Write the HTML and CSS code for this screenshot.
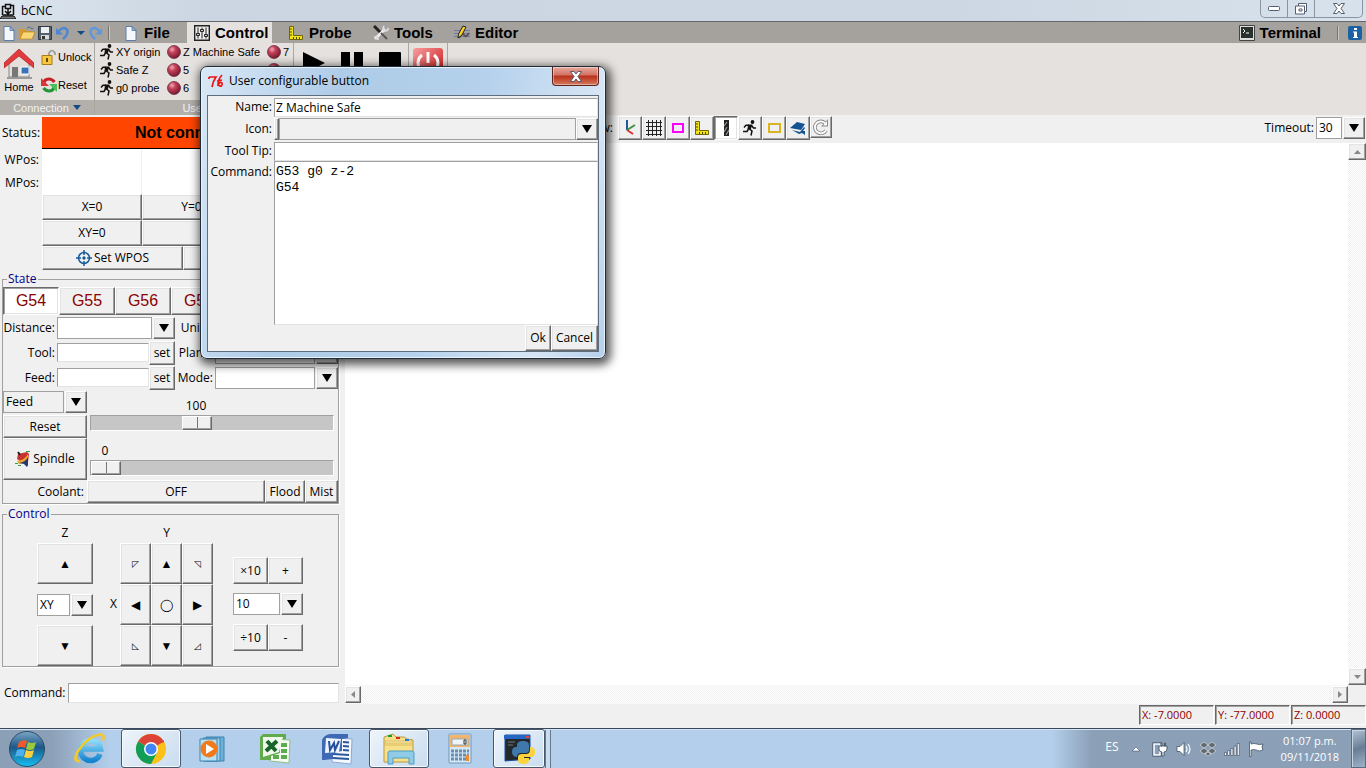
FILE: index.html
```html
<!DOCTYPE html>
<html lang="en">
<head>
<meta charset="utf-8">
<title>bCNC</title>
<link rel="stylesheet" href="styles.css">
</head>
<body>
<svg class="defs" aria-hidden="true">
  <linearGradient id="sky" x1="0" y1="0" x2="0" y2="1"><stop offset="0" stop-color="#7ba6c4"/><stop offset=".45" stop-color="#1c5888"/><stop offset="1" stop-color="#16c0f4"/></linearGradient>
  <linearGradient id="redg" x1="0" y1="0" x2="1" y2="1"><stop offset="0" stop-color="#f6a0a0"/><stop offset="1" stop-color="#cc0d10"/></linearGradient>
  <linearGradient id="ieg" x1="0" y1="0" x2="0" y2="1"><stop offset="0" stop-color="#8bdcfa"/><stop offset="1" stop-color="#1684cf"/></linearGradient>
  <radialGradient id="ballg" cx=".35" cy=".3" r=".7"><stop offset="0" stop-color="#f3a8b4"/><stop offset=".4" stop-color="#c33f58"/><stop offset="1" stop-color="#7a1c30"/></radialGradient>
  <symbol id="page" viewBox="0 0 16 16"><path d="M3 1.500h6l4 4v10H3z" fill="#f4f8fd" stroke="#5c7fae"/><path d="M9 1.500v4h4z" fill="#9fbde2" stroke="#41659a" stroke-width=".7"/></symbol>
  <symbol id="run" viewBox="0 0 16 16"><circle cx="10.500" cy="2" r="1.900" fill="#111"/><path d="M6 4.500h4.500L8.500 10 5.500 9z" fill="#111"/><path d="M7 5.200H4L2 7.500M9.500 5.500l2 2.500H14M6.500 9L5 11.500H1M7.500 9l2.500 2-1 4.500" fill="none" stroke="#111" stroke-width="1.500"/></symbol>
  <symbol id="ball" viewBox="0 0 16 16"><circle cx="8" cy="8" r="6.500" fill="url(#ballg)" stroke="#5b2030" stroke-width=".7"/></symbol>
  <symbol id="ruler" viewBox="0 0 16 16"><path d="M1.500 1.500h4v9h9v4h-13z" fill="#f0e21c" stroke="#706508"/><path d="M2 4h2M2 7h2M2 10h2M5.500 14v-2M8.500 14v-2M11.500 14v-2" stroke="#504800"/></symbol>
</svg>

<div class="window">
  <header class="titlebar">
    <svg class="i16" viewBox="0 0 16 16"><path d="M0 16l2-3h12l2 3z" fill="#777" stroke="#111"/><path d="M2.500 12V3.500h3M13.500 12V2.500h-3M5.500 1.500h5v4h-5zM8 5v6M5 8l3 3 3-3M3 12h10" fill="none" stroke="#111" stroke-width="1.500"/></svg>
    <span>bCNC</span>
    <div class="wincontrols">
      <button aria-label="Minimize"><svg width="12" height="5"><rect x=".5" y=".5" width="11" height="4" rx="1" fill="#fff" stroke="#555d70"/></svg></button>
      <button aria-label="Restore"><svg width="12" height="12"><path d="M3.500 .5h8v8h-2v2.500h-9v-8h3z" fill="#fff" stroke="#555d70"/><path d="M4 6h3v2H4z" fill="#fff" stroke="#555d70"/><path d="M3.500 3h6v5.500" fill="none" stroke="#555d70"/></svg></button>
      <button aria-label="Close"><svg width="12" height="11"><path d="M.5 .5h3.500L6 3 8 .5h3.500L8 5.500l3.500 5H8L6 8l-2 2.500H.5L4 5.500z" fill="#fff" stroke="#555d70"/></svg></button>
    </div>
  </header>

  <nav class="tabs">
    <div class="quick">
      <button aria-label="New"><svg class="i16"><use href="#page"/></svg></button>
      <button aria-label="Open"><svg class="i16" viewBox="0 0 16 16"><path d="M1 14V4h5l1 2h6v8z" fill="#d79b2c"/><path d="M1 14l3-7h12l-3 7z" fill="#fbd774" stroke="#b67b1b" stroke-width=".6"/><path d="M8 3q3-2.500 5 1l1.500-1" fill="none" stroke="#4b6c93"/></svg></button>
      <button aria-label="Save"><svg class="i16" viewBox="0 0 16 16"><path d="M1.500 1.500h13v13h-13z" fill="#54606c" stroke="#2f3a44"/><path d="M4 2h8v6H4z" fill="#eef1f4"/><path d="M4 10h8v4.500H4z" fill="#d6dadd"/><path d="M5 11h3v3H5z" fill="#333"/></svg></button>
      <button aria-label="Undo"><svg class="i16" viewBox="0 0 16 16"><path d="M4 6Q8 1 12 4.500 14 9 8 14" fill="none" stroke="#4b86d6" stroke-width="2.400"/><path d="M1 3v6.500h7z" fill="#4b86d6"/></svg></button>
      <button aria-label="Undo list"><svg class="i16" viewBox="0 0 16 16"><path d="M4 6h8l-4 4z" fill="#134b85"/></svg></button>
      <button aria-label="Redo"><svg class="i16" viewBox="0 0 16 16"><path d="M12 6Q8 1 4 4.500 2 9 8 14" fill="none" stroke="#5f97dc" stroke-width="2.400"/><path d="M15 3v6.500H8z" fill="#5f97dc"/></svg></button>
      <i class="sep"></i>
    </div>
    <button class="tab"><svg class="i16"><use href="#page"/></svg>File</button>
    <button class="tab on"><svg class="i16" viewBox="0 0 16 16"><path d="M.7.700h14.600v14.600H.7z" fill="#eee" stroke="#222" stroke-width="1.400"/><path d="M4 2.500v11M8 2.500v11M12 2.500v11" stroke="#222"/><path d="M2.500 8.500h3v2h-3zM6.500 4.500h3v2h-3zM10.500 9.500h3v2h-3z" fill="#ccc" stroke="#222"/></svg>Control</button>
    <button class="tab probe"><svg class="i16"><use href="#ruler"/></svg>Probe</button>
    <button class="tab tools"><svg class="i16" viewBox="0 0 16 16"><path d="M2 14L12 4" stroke="#eee" stroke-width="2.600"/><path d="M11 1q-2 4 1 5 3 0 3.500-3M1 12q4-1 4 3" fill="none" stroke="#ddd" stroke-width="1.800"/><path d="M1 1l6 6" stroke="#222" stroke-width="3"/><path d="M8 8l6 6" stroke="#555" stroke-width="2"/></svg>Tools</button>
    <button class="tab editor"><svg class="i16" viewBox="0 0 16 16"><path d="M0 5.500h16M0 8.500h16M0 11.500h16" stroke="#7376a8"/><path d="M5 13Q8 7 10 10t5-2" fill="none" stroke="#555" stroke-width="2"/><path d="M4 13l.5-4L9 1l3 1-4 8z" fill="#f9cf22" stroke="#222"/></svg>Editor</button>
    <div class="tabs-end">
      <button class="tab"><svg class="i16" viewBox="0 0 16 16"><path d="M.5.500h15v15H.5z" fill="#ddd" stroke="#444"/><path d="M2 2h12v11H2z" fill="#29312f"/><path d="M4 4l2 2-2 2M7 8h3" fill="none" stroke="#fff"/></svg>Terminal</button>
      <i class="sep"></i>
      <button class="info" aria-label="About"><svg width="14" height="14"><rect width="14" height="14" rx="2" fill="#1d61a5"/><path d="M6 2h3v2H6zM5 5.500h4V11h1v1H5v-1h1V6.500H5z" fill="#fff"/></svg></button>
    </div>
  </nav>

  <div class="ribbon">
    <section class="group conn">
      <div class="body">
        <button class="home"><svg width="30" height="30" viewBox="0 0 30 30"><path d="M5 13l10-8 10 8v15H5z" fill="#e4dfd8" stroke="#888"/><path d="M8 18h6v10H8z" fill="#777"/><path d="M17 18h8v7h-8z" fill="#3674b7" stroke="#fff"/><path d="M3 28h25v2H3z" fill="#999"/><path d="M0 14L15 0l15 14v5L15 7 0 19z" fill="#e13b3d" stroke="#a81a20" stroke-width=".7"/></svg>Home</button>
        <div class="stack">
          <button><svg class="i16" viewBox="0 0 16 16"><path d="M8 7V4q3-5 6 0v2" fill="none" stroke="#999" stroke-width="1.700"/><path d="M1 6.500h10v9H1z" fill="#f6c83e" stroke="#a97b17"/><path d="M5 9h2v4H5z" fill="#6a4b08"/></svg>Unlock</button>
          <button><svg class="i16" viewBox="0 0 16 16"><path d="M2.500 7Q3 2 8 2q3 0 5.500 3" fill="none" stroke="#c62029" stroke-width="3.200"/><path d="M0 1v8h8z" fill="#d9343b"/><path d="M13.500 9q-1 5-5.500 5-3 0-5.500-3" fill="none" stroke="#239437" stroke-width="3.200"/><path d="M16 15V7H8z" fill="#46c05a"/></svg>Reset</button>
        </div>
      </div>
      <h2>Connection <svg width="8" height="5"><path d="M0 0h8L4 5z" fill="#134b85"/></svg></h2>
    </section>
    <section class="group user">
      <div class="body">
        <button><svg class="i16"><use href="#run"/></svg>XY origin</button>
        <button><svg class="i16"><use href="#ball"/></svg>Z Machine Safe</button>
        <button><svg class="i16"><use href="#ball"/></svg>7</button>
        <button><svg class="i16"><use href="#run"/></svg>Safe Z</button>
        <button><svg class="i16"><use href="#ball"/></svg>5</button>
        <button aria-label="User button"><svg class="i16"><use href="#ball"/></svg></button>
        <button><svg class="i16"><use href="#run"/></svg>g0 probe</button>
        <button><svg class="i16"><use href="#ball"/></svg>6</button>
      </div>
      <h2>User</h2>
    </section>
    <section class="group play">
      <div class="body">
        <button aria-label="Start"><svg width="24" height="24"><path d="M1 1l22 11L1 23z"/></svg></button>
        <button aria-label="Pause"><svg width="24" height="24"><path d="M1 1h9v22H1zM14 1h9v22h-9z"/></svg></button>
        <button aria-label="Stop"><svg width="24" height="24"><rect x="1" y="1" width="22" height="22" rx="1"/></svg></button>
      </div>
    </section>
    <section class="group power">
      <div class="body">
        <button aria-label="Power"><svg width="30" height="30"><rect width="30" height="30" rx="3" fill="url(#redg)"/><path d="M9 7a10 10 0 1 0 12 0M15 4v11" fill="none" stroke="#fff" stroke-width="3"/></svg></button>
      </div>
    </section>
  </div>

  <main class="work">
    <aside class="side">
      <div class="dro">
        <span class="lab">Status:</span><button class="state">Not connected</button>
        <span class="lab">WPos:</span><output></output><output></output><output></output>
        <span class="lab">MPos:</span><output></output><output></output><output></output>
        <button class="raised c2">X=0</button><button class="raised">Y=0</button><button class="raised">Z=0</button>
        <button class="raised c2">XY=0</button><button class="raised wide">XYZ=0</button>
      </div>
      <div class="wpos">
        <button class="raised"><svg class="i16" viewBox="0 0 16 16"><circle cx="8" cy="8" r="5.500" fill="none" stroke="#16599b" stroke-width="1.500"/><circle cx="8" cy="8" r="1.700" fill="#16599b"/><path d="M8 0v5M8 11v5M0 8h5M11 8h5" stroke="#16599b" stroke-width="1.500"/></svg>Set WPOS</button>
        <button class="raised">Move Gantry</button>
      </div>

      <fieldset class="frame">
        <legend>State</legend>
        <div class="wcs">
          <button class="raised pressed">G54</button><button class="raised">G55</button><button class="raised">G56</button><button class="raised">G57</button><button class="raised">G58</button><button class="raised">G59</button>
        </div>
        <div class="params">
          <label for="dist">Distance:</label>
          <div class="combo span"><select id="dist"><option></option></select><span class="arrow"></span></div>
          <label for="units">Units:</label>
          <div class="combo"><select id="units"><option></option></select><span class="arrow"></span></div>
          <label for="tool">Tool:</label><input class="entry" id="tool"><button class="raised">set</button>
          <label for="plane">Plane:</label>
          <div class="combo"><select id="plane"><option></option></select><span class="arrow"></span></div>
          <label for="feed">Feed:</label><input class="entry" id="feed"><button class="raised">set</button>
          <label for="mode">Mode:</label>
          <div class="combo"><select id="mode"><option></option></select><span class="arrow"></span></div>
        </div>
        <div class="override">
          <div class="ovleft">
            <div class="combo grey"><select aria-label="Override"><option>Feed</option></select><span class="arrow"></span></div>
            <button class="raised">Reset</button>
            <button class="raised"><svg class="i16" viewBox="0 0 16 16"><path d="M3 3l9-2 2 2-1 8-5 1-6-4z" fill="#c5342e"/><path d="M2 10q8-1 11-7v4l-4 5-5 1z" fill="#f0a528"/><path d="M4 12q7-1 9-6v8l-1 2-3-3z" fill="#25376f"/><path d="M11 .5h4M0 12.500h3M3 14.500h3" stroke="#2ba53a"/><path d="M3 1l2 3" stroke="#222" stroke-width="2"/></svg>Spindle</button>
          </div>
          <div class="ovright">
            <output class="ov1" for="ov">100</output>
            <input type="range" id="ov" aria-label="Feed override" min="0" max="232" value="100">
            <output for="rpm">0</output>
            <input type="range" id="rpm" aria-label="Spindle speed" min="0" max="12000" value="0">
          </div>
        </div>
        <div class="coolant"><span>Coolant:</span><button class="raised">OFF</button><button class="raised">Flood</button><button class="raised">Mist</button></div>
      </fieldset>

      <fieldset class="frame jog">
        <legend>Control</legend>
        <div class="jogrow">
          <div class="zcol"><span>Z</span><button class="raised">▲</button><div class="combo"><select aria-label="Plane lock"><option>XY</option></select><span class="arrow"></span></div><button class="raised">▼</button></div>
          <span class="xlab">X</span>
          <div class="pad">
            <span>Y</span>
            <button class="raised diag">◸</button><button class="raised">▲</button><button class="raised diag">◹</button>
            <button class="raised">◀</button><button class="raised">◯</button><button class="raised">▶</button>
            <button class="raised diag">◺</button><button class="raised">▼</button><button class="raised diag">◿</button>
          </div>
          <div class="steps">
            <button class="raised">×10</button><button class="raised">+</button>
            <div class="combo"><select aria-label="Step"><option>10</option></select><span class="arrow"></span></div>
            <button class="raised">÷10</button><button class="raised">-</button>
          </div>
        </div>
      </fieldset>
      <div class="cmd"><label for="cmd">Command:</label><input class="entry" id="cmd"></div>
    </aside>

    <section class="view">
      <div class="viewbar">
        <span class="viewlab">View:</span>
        <button class="raised" aria-label="Axes"><svg class="i16" viewBox="0 0 16 16"><path d="M5 0v10" stroke="#1e5b98" stroke-width="2"/><path d="M5 10l8-5" stroke="#3d9140" stroke-width="2"/><path d="M5 10l6 4" stroke="#d33" stroke-width="2"/></svg></button>
        <button class="raised" aria-label="Grid"><svg class="i16" viewBox="0 0 16 16"><path d="M2.500 0v16M6.500 0v16M10.500 0v16M14.500 0v16M0 2.500h16M0 6.500h16M0 10.500h16M0 14.500h16" stroke="#222"/></svg></button>
        <button class="raised" aria-label="Margins"><svg class="i16" viewBox="0 0 16 16"><path d="M3 4h10v8H3z" fill="none" stroke="#f0f" stroke-width="2"/></svg></button>
        <button class="raised" aria-label="Probe"><svg class="i16"><use href="#ruler"/></svg></button>
        <button class="raised pressed" aria-label="Paths"><svg class="i16" viewBox="0 0 16 16"><path d="M6 0h5v16H6z" fill="#222"/><path d="M6 6l3-4M6 12l3-5M8 15l3-5" stroke="#999" stroke-width="1.200"/></svg></button>
        <button class="raised" aria-label="Rapids"><svg class="i16"><use href="#run"/></svg></button>
        <button class="raised" aria-label="Workarea"><svg class="i16" viewBox="0 0 16 16"><path d="M3 4h11v8H3z" fill="none" stroke="#d9b423" stroke-width="2"/></svg></button>
        <button class="raised" aria-label="Camera"><svg class="i16" viewBox="0 0 16 16"><path d="M0 8l7-6 8 2-4 6z" fill="#155493"/><path d="M2 10l8 2 4-5 1 1-2 3h2v4l-3-2-3 1z" fill="#155493"/></svg></button>
        <button class="raised" aria-label="Refresh"><svg class="i16" viewBox="0 0 16 16"><path d="M13 11.500A6 6 0 1 1 12 4" fill="none" stroke="#888" stroke-width="3.600"/><path d="M15 0v7.500H8z" fill="#888"/><path d="M13 11.500A6 6 0 1 1 12.500 4.500" fill="none" stroke="#fff" stroke-width="1.800"/><path d="M14 2v4.500h-4z" fill="#fff"/></svg></button>
        <div class="timeout"><label for="tmo">Timeout:</label><div class="combo"><select id="tmo"><option>30</option></select><span class="arrow"></span></div></div>
      </div>
      <div class="canvas"></div>
      <div class="vscroll"><button class="raised" aria-label="Scroll up"><svg width="7" height="4"><path d="M0 4h7L3.500 0z"/></svg></button><button class="raised" aria-label="Scroll down"><svg width="7" height="4"><path d="M0 0h7L3.500 4z"/></svg></button></div>
      <div class="hscroll"><button class="raised" aria-label="Scroll left"><svg width="4" height="7"><path d="M4 0v7L0 3.500z"/></svg></button><button class="raised" aria-label="Scroll right"><svg width="4" height="7"><path d="M0 0v7l4-3.500z"/></svg></button></div>
    </section>
  </main>

  <footer class="status"><span>X: -7.0000</span><span>Y: -77.0000</span><span>Z: 0.0000</span></footer>

  <div class="taskbar">
    <button class="start" aria-label="Start"><svg width="38" height="38" viewBox="0 0 38 38"><circle cx="19" cy="19" r="17.500" fill="url(#sky)" stroke="#2c4b6b"/><path d="M11 12q4-3 8-1l-2 7q-4-2-8 0z" fill="#f0592b"/><path d="M20 12q4 2 8 0l-2 7q-4 2-8 0z" fill="#9bc93c"/><path d="M9 20q4-2 8 0l-2 7q-4-2-8 0z" fill="#4eb1ef"/><path d="M18 20q4 2 8 0l-2 7q-4 2-8 0z" fill="#fdcf3e"/></svg></button>
    <button class="app ie" aria-label="Internet Explorer"><svg width="32" height="32" viewBox="0 0 32 32"><path d="M26 21A10 10 0 1 1 26.500 16H9" fill="none" stroke="url(#ieg)" stroke-width="5.500"/><path d="M6 28Q-2 29 4 18 14 3 26 1.500q5-.5 3 6" fill="none" stroke="#f6c924" stroke-width="2.500"/></svg></button>
    <button class="app active" aria-label="Chrome"><svg width="32" height="32" viewBox="0 0 32 32"><circle cx="16" cy="16" r="15" fill="#fbc116"/><path d="M16 16L3 8.500A15 15 0 0 1 29 8.500z" fill="#db4437"/><path d="M3 8.500A15 15 0 0 0 16 31l6-11.500L16 16z" fill="#0f9d58"/><path d="M16 8.500h13" stroke="#db4437" stroke-width="2"/><circle cx="16" cy="16" r="7" fill="#fff"/><circle cx="16" cy="16" r="5.500" fill="#4285f4"/></svg></button>
    <button class="app" aria-label="Media Player"><svg width="32" height="32" viewBox="0 0 32 32"><path d="M9 4h18v24H9z" fill="#6db3d9" stroke="#3a83ae"/><path d="M6 5h17v23H6z" fill="#9fd1ec" stroke="#3a83ae"/><path d="M3 6h17v22H3z" fill="#b9dff2" stroke="#3a83ae"/><circle cx="12" cy="16" r="8.500" fill="#f17a1a"/><path d="M9 11l8 5-8 5z" fill="#fff"/></svg></button>
    <button class="app" aria-label="Excel"><svg width="32" height="32" viewBox="0 0 32 32"><path d="M11 6l20 1-1 23-19-2z" fill="#f4faf2" stroke="#8fbf86"/><path d="M22 10h6v4h-6zM22 16h6v4h-6zM22 22h6v4h-6zM14 22h6v4h-6z" fill="#5cab4e"/><path d="M1 4l3-3h23v5l-6 1v13l-9 3v4H1z" fill="#62ab4d"/><path d="M4 4h20L20 19 4 24z" fill="#eff8ea"/><path d="M8 8l9 10M18 8L7 18" stroke="#17652a" stroke-width="4"/></svg></button>
    <button class="app" aria-label="Word"><svg width="32" height="32" viewBox="0 0 32 32"><path d="M12 5l19 1-1 25-19-2z" fill="#f5f9ff" stroke="#8ba9d7"/><path d="M22 9l6 .5M22 13l6 .5M22 17l6 .5M12 21l16 1M12 25l16 1" stroke="#2b579a" stroke-width="2"/><path d="M1 7q2-5 8-6h18v4l-6 1v12l-9 2v6L3 27H1z" fill="#3f69b4"/><path d="M5 5l15 1-2 13-14 1z" fill="#eef4fd"/><path d="M8 8l1 9 4-7 1 7 4-9" fill="none" stroke="#23509d" stroke-width="2"/></svg></button>
    <button class="app active files" aria-label="Explorer"><svg width="34" height="32" viewBox="0 0 34 32"><path d="M2 4l9-3 3 3h8l3 2 6 1v22H2z" fill="#f7e08c" stroke="#b99a3f"/><path d="M3 8h27v2H3zM3 12h27" fill="#fdf2bd" stroke="#d8bb5a"/><path d="M6 2h4v2H6z" fill="#1a9f2d"/><path d="M14 4h4v2h-4z" fill="#d42b20"/><path d="M23 6h4v2h-4z" fill="#2b7cd4"/><path d="M6 31V20q0-2 2-2h22q2 0 2 2v11h-5v-6H11v6z" fill="#8fcbe6" stroke="#4f9dc3"/></svg></button>
    <button class="app calc" aria-label="Calculator"><svg width="24" height="32" viewBox="0 0 24 32"><rect x="1" y="1" width="22" height="29" rx="1" fill="#d5e8f7" stroke="#7195b8"/><path d="M2 2h20v12H2z" fill="#f3b46e"/><path d="M4 6h16v6H4z" fill="#eef6fb" stroke="#95a9b6"/><path d="M16 7h2v4h-2z" fill="none" stroke="#333"/><path d="M3 18h18M3 22h18M3 26h18" stroke="#6b8eae" stroke-width="3" stroke-dasharray="3 1"/><path d="M18 22h3v6h-3z" fill="#f18a2b"/></svg></button>
    <button class="app active py" aria-label="Python"><svg width="32" height="32" viewBox="0 0 32 32"><path d="M2 2h25v24L2 28z" fill="#23282d" stroke="#164ea0"/><path d="M1 2h26v4H1z" fill="#2467c4"/><path d="M23 3h3v2h-3z" fill="#e04434"/><path d="M5 9h7M5 12h5" stroke="#777"/><path d="M14 15v-3q0-4 6-4t6 4v5q0 3-3 3h-5q-4 0-4 4h-1q-4-1-4-5 0-5 4-5h7v1z" fill="#3f79ab"/><path d="M27 14q5 0 5 5t-4 5h-7v1h5v2q0 4-6 4-5 0-5-4v-3q0-3 4-3h4q4 0 4-4z" fill="#fdd33c"/></svg></button>
    <i class="stacked"></i>
    <div class="tray">
      <span class="lang">ES</span>
      <svg width="10" height="16"><path d="M1 10h8L5 6z" fill="#fff" stroke="#43597a" stroke-width=".6"/></svg>
      <svg class="i16" viewBox="0 0 16 16"><path d="M2 3h6v11H2z" fill="none" stroke="#35475c" stroke-width="3"/><path d="M2 3h6v11H2z" fill="#8b9fb6" stroke="#fff" stroke-width="1.600"/><path d="M7 5h8v3q0 3-3 3v4h-2v-4q-3 0-3-3zM9 2h1v3H9zM12.500 2h1v3h-1z" fill="#fff" stroke="#35475c" stroke-width=".8"/></svg>
      <svg class="i16" viewBox="0 0 16 16"><path d="M1 5.500h3l4-4v13l-4-4H1z" fill="#fff" stroke="#35475c" stroke-width=".7"/><path d="M10 5q2 3 0 6M12 3q4 5 0 10" fill="none" stroke="#fff" stroke-width="1.200"/></svg>
      <svg class="i16" viewBox="0 0 16 16"><path d="M4 1l4 3-4 3-4-3zM12 1l4 3-4 3-4-3zM4 7l4 3-4 3-4-3zM12 7l4 3-4 3-4-3zM8 11l3 2-3 2-3-2z" fill="#61696f" stroke="#e6e9ed" stroke-width=".6"/></svg>
      <svg class="i16" viewBox="0 0 16 16"><path d="M.5 11.500h2v3h-2zM3.700 9.500h2v5h-2zM6.900 7.500h2v7h-2zM10.100 5h2v9.500h-2zM13.300 2.500h2v12h-2z" fill="#fff" stroke="#35475c" stroke-width=".6"/></svg>
      <svg class="i16" viewBox="0 0 16 16"><path d="M1.500 1v14.500h1.500V9q3-1 5 0 3 2 7 0-2-3 0-6-4 1-6 0-3-1-6 0V1z" fill="#fff" stroke="#35475c" stroke-width=".7"/></svg>
      <time>01:07 p.m.<br>09/11/2018</time>
      <button class="desk" aria-label="Show desktop"></button>
    </div>
  </div>
</div>

<div class="dialog" role="dialog" aria-labelledby="dlgt">
  <div class="dlgtitle"><svg class="i16" viewBox="0 0 16 16"><path d="M1 4h7Q5 8 4 14M1 4v2M14 2q-4 4-4 11M9 8l5-1M10 12q5 3 4-2-2-2-4 2" fill="none" stroke="#f01010" stroke-width="1.700"/></svg><span id="dlgt">User configurable button</span></div>
  <button class="dlgclose" aria-label="Close"><svg width="12" height="11"><path d="M.5 .5h3.500L6 3 8 .5h3.500L8 5.500l3.500 5H8L6 8l-2 2.500H.5L4 5.500z" fill="#fff" stroke="#555d70"/></svg></button>
  <form class="dlgbody">
    <label for="bname">Name:</label><input class="entry" id="bname" value="Z Machine Safe">
    <label for="bicon">Icon:</label><div class="combo grey iconsel"><i class="raised"></i><select id="bicon"><option></option></select><span class="arrow"></span></div>
    <label for="btip">Tool Tip:</label><input class="entry" id="btip">
    <label for="bcmd" class="top">Command:</label><textarea class="entry" id="bcmd" spellcheck="false">G53 g0 z-2
G54</textarea>
    <div class="actions"><button type="button" class="raised">Ok</button><button type="button" class="raised">Cancel</button></div>
  </form>
</div>
</body>
</html>
```
FILE: styles.css
```css
* { box-sizing: border-box; }
body, h2, fieldset { margin: 0; padding: 0; }
body { font: 12px/16px "Open Sans", "Noto Sans", sans-serif; color: #000; background: #f0f0f0; }
button, input, select, textarea { font: inherit; color: inherit; margin: 0; padding: 0; border-radius: 0; }
button { background: none; border: 0; white-space: nowrap; }
svg { flex: none; display: block; }
.defs { position: absolute; width: 0; height: 0; }
.i16 { width: 16px; height: 16px; }
.window { display: flex; flex-direction: column; height: 100vh; overflow: hidden; }

/* Tk widgets */
.raised, .arrow {
  display: flex; align-items: center; justify-content: center; gap: 2px;
  background: #f0f0f0; border: 1px solid; border-color: #fff #696969 #696969 #fff;
  box-shadow: inset -1px -1px #a0a0a0, inset 1px 1px #e3e3e3;
  min-width: 0; overflow: hidden;
}
.raised.pressed { background: #fff; border-color: #696969 #fff #fff #696969; box-shadow: inset 1px 1px #a0a0a0, inset -1px -1px #e3e3e3; }
.entry { background: #fff; border: 1px solid; border-color: #a0a0a0 #e3e3e3 #e3e3e3 #a0a0a0; min-width: 0; height: 19px; padding: 0 1px; }
.combo { display: flex; height: 22px; gap: 1px; min-width: 0; }
.combo select { appearance: none; flex: 1; min-width: 0; background: #fff; border: 1px solid #a0a0a0; padding: 0 2px; }
.combo.grey select { background: #f0f0f0; }
.arrow { width: 22px; flex: none; pointer-events: none; }
.arrow::before { content: ""; border: 5px solid transparent; border-top: 8px solid #000; border-bottom: 0; }

/* title bar */
.titlebar { display: flex; align-items: center; gap: 5px; height: 22px; flex: none; background: linear-gradient(90deg, #dce5ee, #cbd6e2 15%, #ccd7e3 70%, #d8e2ec); border-bottom: 1px solid #64686d; }
.wincontrols { display: flex; align-self: flex-start; margin-left: auto; margin-right: 3px; border: 1px solid #8a95a3; border-top: 0; border-radius: 0 0 5px 5px; }
.wincontrols button { width: 27px; height: 17px; display: flex; align-items: center; justify-content: center; border-right: 1px solid #8a95a3; }
.wincontrols button:last-child { width: 47px; border: 0; }

/* tabs */
.tabs { display: flex; height: 21px; flex: none; background: #a5a19d; font: bold 15px/20px "Liberation Sans", Arial, sans-serif; }
.quick { display: flex; align-items: center; width: 116px; flex: none; padding-left: 1px; }
.quick button { width: 18px; flex: none; }
.quick button:nth-of-type(5) { width: 14px; }
.sep { width: 2px; height: 14px; background: #77736f; border-right: 1px solid #c9c6c3; margin-left: 3px; }
.tab { display: flex; align-items: center; gap: 5px; padding: 0 4px 0 7px; }
.quick + .tab { width: 71px; }
.on { background: #e5e1de; width: 85px; }
.probe, .tools, .editor { padding-left: 16px; }
.probe { width: 85px; }
.tools { width: 81px; }
.tabs-end { display: flex; align-items: center; margin-left: auto; }
.tabs-end .sep { margin: 0 9px 0 12px; }
.info { margin-right: 4px; }

/* ribbon */
.ribbon { display: flex; height: 72px; flex: none; background: #e5e1de; font: 11px/14px "Liberation Sans", Arial, sans-serif; }
.group { display: flex; flex-direction: column; border-right: 1px solid #aaa6a2; }
.group .body { flex: 1; }
.group button { display: flex; align-items: center; gap: 1px; }
.group h2 { display: flex; align-items: center; justify-content: center; gap: 4px; height: 15px; font: inherit; font-weight: 400; color: #f4f2f0; background: #b3afab; }
.conn { width: 95px; }
.conn .body { display: flex; gap: 4px; padding-left: 4px; }
.conn .home { flex-direction: column; gap: 1px; padding-top: 6px; }
.stack { display: flex; flex-direction: column; justify-content: space-between; padding: 6px 0 7px 3px; }
.user { width: 199px; }
.user .body { display: grid; grid-template-columns: 67px 100px 1fr; grid-auto-rows: 18px; padding-left: 4px; }
.play { width: 115px; }
.play .body { display: flex; align-items: flex-start; gap: 14px; padding: 8px 0 0 8px; }
.power { width: 39px; }
.power .body { padding: 5px 4px; }

/* left panel */
.work { display: flex; flex: 1; min-height: 0; }
.side { width: 345px; flex: none; display: flex; flex-direction: column; padding: 2px 6px 1px 2px; }
.dro { display: grid; grid-template-columns: 40px 100px 99px 1fr; grid-template-rows: 32px 22px 23px 26px 26px; }
.dro .lab { align-self: center; text-align: right; padding-right: 3px; }
.dro .lab:first-child { padding-right: 2px; }
.state { grid-column: 2 / 5; background: #ff4500; border-bottom: 1px solid #000; font: bold 16px/20px "Liberation Sans", Arial, sans-serif; }
.dro output { background: #fff; border-right: 1px solid #f0f0f0; }
.c2 { grid-column: 2; }
.wide { grid-column: 3 / 5; }
.wpos { display: grid; grid-template-columns: 141px 1fr; height: 24px; padding-left: 40px; }
.frame { border: 1px solid #a0a0a0; min-width: 0; width: 337px; box-shadow: 1px 1px #fff; margin-top: 1px; }
.frame legend { height: 16px; line-height: 16px; margin-left: 4px; padding: 0 1px; color: #00008b; }
.wcs { display: grid; grid-template-columns: repeat(6, 56px); grid-auto-rows: 28px; overflow: hidden; color: #8b0000; font: 16px/20px "Liberation Sans", Arial, sans-serif; }
.params { display: grid; grid-template-columns: 54px 92px 26px 40px 1fr; grid-auto-rows: 25px; align-items: center; }
.params label { text-align: right; padding-right: 2px; }
.params button { height: 24px; }
.span { grid-column: 2 / 4; }
.override { display: flex; gap: 3px; padding-top: 1px; }
.ovleft { display: grid; width: 84px; grid-template-rows: 24px 23px 42px; }
.ovright { display: flex; flex-direction: column; flex: 1; padding: 7px 4px 0 0; }
.ovright output { width: 30px; text-align: center; }
.ov1 { margin-left: 91px; }
input[type=range] { appearance: none; width: 100%; height: 16px; background: #c6c6c6; border: 1px solid; border-color: #a0a0a0 #fff #fff #a0a0a0; }
.ovright input { margin: 1px 0 12px; flex: none; }
.ovright input:last-child { margin-bottom: 0; }
input[type=range]::-webkit-slider-thumb { appearance: none; width: 30px; height: 14px; background: linear-gradient(90deg, #f0f0f0 14px, #777 14px, #777 15px, #f0f0f0 15px); border: 1px solid; border-color: #fff #696969 #696969 #fff; box-shadow: inset -1px -1px #a0a0a0; }
.coolant { display: grid; grid-template-columns: 84px 1fr 40px 33px; height: 23px; }
.coolant span { text-align: right; align-self: center; padding-right: 3px; }
.jog { margin-top: 2px; }
.jogrow { display: flex; align-items: flex-start; padding: 3px 0 0 34px; }
.jog button { font-size: 12px; }
.jog .diag { font-size: 9px; }
.zcol, .pad { display: grid; grid-template-rows: 18px 41px 41px 41px; text-align: center; align-items: stretch; }
.zcol { width: 56px; }
.zcol .combo { align-self: center; text-align: left; }
.xlab { width: 27px; padding: 71px 3px 0 0; text-align: right; }
.pad { grid-template-columns: repeat(3, 31px); }
.pad > span { grid-column: 1 / 4; }
.steps { display: grid; grid-template-columns: 35px 35px; grid-template-rows: 27px 22px 27px; row-gap: 9px; padding: 32px 0 0 20px; }
.steps .combo { grid-column: 1 / 3; }
.cmd { display: flex; align-items: center; gap: 2px; margin-top: auto; padding-left: 2px; }
.cmd input { flex: 1; height: 20px; }

/* canvas side */
.view { flex: 1; min-width: 0; display: grid; grid-template: 28px 1fr 19px / 1fr 18px; }
.viewbar { grid-column: 1 / 3; display: flex; align-items: flex-start; padding: 1px 0 0 238px; }
.viewlab { width: 35px; text-align: right; padding: 4px 5px 0 0; flex: none; }
.viewbar .raised { width: 24px; height: 24px; flex: none; }
.viewbar .raised:last-of-type { width: 22px; height: 22px; }
.timeout { display: flex; align-items: center; gap: 2px; margin-left: auto; padding-top: 1px; }
.timeout .combo { width: 50px; padding-right: 1px; }
.canvas { background: #fff; }
.vscroll, .hscroll { display: flex; justify-content: space-between; background: repeating-conic-gradient(#fff 0 25%, #f0f0f0 0 50%) 0 0 / 2px 2px; }
.vscroll { flex-direction: column; }
.vscroll button, .hscroll button { width: 16px; height: 17px; fill: #888; }
.vscroll button { width: auto; }
.hscroll { align-items: center; }

/* status */
.status { display: flex; justify-content: flex-end; gap: 1px; height: 24px; flex: none; padding: 1px 0 3px; color: #8b0000; font-size: 11px; }
.status span { width: 75px; padding: 1px 2px; border: 1px solid; border-color: #696969 #fff #fff #696969; box-shadow: inset 1px 1px #a0a0a0; white-space: nowrap; overflow: hidden; }

/* taskbar */
.taskbar { display: flex; align-items: center; height: 40px; flex: none; border-top: 1px solid #39485a; box-shadow: inset 0 1px #d5e5f5; background: linear-gradient(90deg, #8b9fb6 0, #8b9fb6 50px, #b3cfeb 110px, #b3cfeb 77%, #8b9fb6 80%); }
.start { width: 60px; flex: none; padding-left: 8px; }
.app { width: 60px; height: 39px; flex: none; display: flex; align-items: center; justify-content: center; margin-right: 2px; }
.active { border: 1px solid #47586c; border-radius: 3px; background: linear-gradient(135deg, #eef4fa, #c9dcef); box-shadow: inset 0 0 0 1px #f6fafd; }
.ie { margin-right: 1px; }
.calc { margin-right: 3px; }
.files { margin-right: 1px; }
.py { width: 52px; margin-right: 0; }
.stacked { width: 6px; height: 38px; border: solid #66788c; border-width: 0 1px; background: #c9dcef; }
.tray { display: flex; align-items: center; height: 39px; gap: 8px; margin-left: auto; color: #fff; }
.lang { padding-right: 4px; margin-top: -4px; }
.tray time { text-align: center; padding: 0 4px 0 9px; font-size: 11px; }
.tray .lang + svg { margin-right: 3px; }
.desk { width: 15px; height: 39px; border: 1px solid #5b6c80; box-shadow: inset 1px 1px #c9d5e2; background: linear-gradient(160deg, #b3c2d3, #697e96 50%, #9db3c9); }

/* dialog floats over the window */
.dialog { position: absolute; left: 200px; top: 66px; width: 406px; border: 1px solid #222c38; border-radius: 7px; padding: 0 6px 6px; background: linear-gradient(105deg, #d9e8f6, #aecbe7 30%, #b5d1ec 60%, #d7e6f5 85%, #b5d0ea); box-shadow: inset 0 0 0 1px #e8f2fb, 2px 3px 10px 3px rgba(0, 0, 0, .65); }
.dlgtitle { display: flex; align-items: center; gap: 5px; height: 28px; padding-left: 1px; }
.dlgclose { position: absolute; right: 6px; top: 0; width: 47px; height: 19px; display: flex; align-items: center; justify-content: center; border: 1px solid #5c2520; border-top: 0; border-radius: 0 0 4px 4px; background: linear-gradient(#e7aa9e, #d27161 45%, #b9301b 50%, #d47a5c); box-shadow: inset 0 0 0 1px rgba(255, 255, 255, .4); }
.dlgbody { display: grid; grid-template-columns: 66px 1fr; grid-template-rows: 20px 24px 20px 164px 26px; align-items: center; background: #f0f0f0; border: 1px solid #5f6e7e; padding-top: 1px; }
.dlgbody label { text-align: right; padding-right: 2px; }
.dlgbody .top { align-self: start; padding-top: 3px; }
textarea.entry { height: 164px; resize: none; padding-top: 2px; font: 13px/16px "Liberation Mono", "Courier New", monospace; }
.iconsel .raised { width: 5px; flex: none; }
.iconsel { gap: 0; }
.actions { grid-column: 1 / 3; display: flex; justify-content: flex-end; }
.actions button { height: 26px; padding: 0 4px; }
```
